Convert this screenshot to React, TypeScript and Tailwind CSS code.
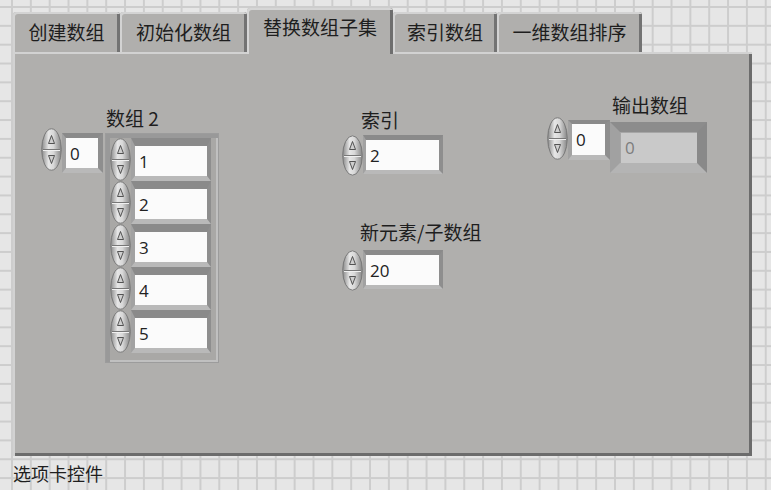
import React from 'react';

const CJK = "font-['Noto_Sans_CJK_SC','Noto_Sans',sans-serif]";
const NUM = "font-['Open_Sans','Noto_Sans',sans-serif]";

const tabs = [
  { label: '创建数组', w: 107 },
  { label: '初始化数组', w: 127 },
  { label: '替换数组子集', w: 146, active: true },
  { label: '索引数组', w: 104 },
  { label: '一维数组排序', w: 145 },
];

function Spinner({ h = 43 }: { h?: number }) {
  const mid = h / 2;
  return (
    <svg width="21" height={h} viewBox={`0 0 21 ${h}`} className="shrink-0">
      <defs>
        <linearGradient id="spg" x1="0" x2="1" y1="0" y2="0">
          <stop offset="0" stopColor="#8a8a8a" />
          <stop offset="0.35" stopColor="#e6e6e6" />
          <stop offset="0.6" stopColor="#d8d8d8" />
          <stop offset="1" stopColor="#858585" />
        </linearGradient>
      </defs>
      <ellipse cx="10.5" cy={mid} rx="9.8" ry={mid - 0.8} fill="url(#spg)" stroke="#787878" strokeWidth="1" />
      <line x1="2" y1={mid} x2="19" y2={mid} stroke="#777" strokeWidth="1" />
      <line x1="2" y1={mid + 1} x2="19" y2={mid + 1} stroke="#f0f0f0" strokeWidth="1" />
      <path d={`M10.5 ${mid - 14} L7.5 ${mid - 6} L13.5 ${mid - 6} Z`} fill="#cfcfcf" stroke="#444" strokeWidth="0.9" strokeLinejoin="round" />
      <path d={`M10.5 ${mid + 14} L7.5 ${mid + 6} L13.5 ${mid + 6} Z`} fill="#cfcfcf" stroke="#444" strokeWidth="0.9" strokeLinejoin="round" />
    </svg>
  );
}

function NumBox({ value, w, h, frame = 'border-t-[5px] border-l-[3px] border-r-[4px] border-b-[4px]' }: { value: string; w: number; h: number; frame?: string }) {
  return (
    <div
      className={`flex shrink-0 border-t-[#8a8a8a] border-l-[#a2a2a2] border-r-[#8e8e8e] border-b-[#b9b9b9] ${frame}`}
      style={{ width: w, height: h }}
    >
      <div className={`flex-1 flex items-center pl-[4px] bg-[#fbfbfb] text-[#222] text-[17px] leading-none ${NUM}`}>{value}</div>
    </div>
  );
}

function Label({ text, className = '' }: { text: string; className?: string }) {
  return <div className={`whitespace-nowrap text-[19px] leading-[19px] ${CJK} ${className}`}>{text}</div>;
}

export default function App() {
  return (
    <div className="w-[771px] h-[490px] overflow-hidden bg-[#e6e6e6] bg-[linear-gradient(to_right,#cdcdcd_2px,transparent_2px),linear-gradient(to_bottom,#cdcdcd_2px,transparent_2px)] [background-size:18.85px_18.85px] [background-position:11px_6px] pl-[13px] pt-[8px] text-[#1e1e1e]">
      {/* tab strip */}
      <div className="flex items-end h-[44px]">
        {tabs.map((t) =>
          t.active ? (
            <div
              key={t.label}
              className={`relative z-10 h-[46px] -mb-[2px] flex items-start justify-center pt-[6px] bg-[#b0afad] rounded-t-[3px] shadow-[inset_2px_2px_0_#d6d6d6,inset_-3px_0_0_#6e6e6e] text-[19px] leading-[26px] ${CJK}`}
              style={{ width: t.w }}
            >
              {t.label}
            </div>
          ) : (
            <div
              key={t.label}
              className={`h-[40px] flex items-center justify-center pb-[1px] bg-[#b0afad] rounded-t-[3px] shadow-[inset_2px_2px_0_#d3d3d3,inset_-3px_0_0_#737373] text-[19px] leading-none ${CJK}`}
              style={{ width: t.w }}
            >
              {t.label}
            </div>
          )
        )}
      </div>

      {/* tab page */}
      <div className="w-[739px] h-[404px] bg-[#b0afad] shadow-[inset_2px_2px_0_#d2d2d2,inset_-3px_-3px_0_#6c6c6c] flex items-start pl-[28px]">
        {/* 数组 2 */}
        <div className="flex flex-col mt-[56px] w-[177px]">
          <Label text="数组 2" className="ml-[65px]" />
          <div className="flex items-start mt-[1px]">
            <Spinner h={43} />
            <div className="mt-[5px]">
              <NumBox value="0" w={41} h={40} frame="border-t-[5px] border-l-[4px] border-r-[5px] border-b-[5px]" />
            </div>
            <div className="ml-[3px] mt-[6px] w-[112px] h-[228px] flex flex-col pt-[4px] pl-[4px] bg-[#a9a8a6] shadow-[inset_4px_4px_0_#999,inset_-2px_-2px_0_#c0c0c0,0_0_0_1px_#9c9c9c]">
              {['1', '2', '3', '4', '5'].map((v) => (
                <div key={v} className="flex">
                  <Spinner h={43} />
                  <NumBox value={v} w={80} h={43} frame="border-t-[8px] border-l-[4px] border-r-[4px] border-b-[5px]" />
                </div>
              ))}
            </div>
          </div>
        </div>

        {/* 索引 / 新元素 */}
        <div className="flex flex-col ml-[124px] mt-[58px] w-[101px]">
          <Label text="索引" className="ml-[19px]" />
          <div className="flex mt-[6px]">
            <Spinner h={41} />
            <NumBox value="2" w={80} h={39} />
          </div>
          <Label text="新元素/子数组" className="ml-[18px] mt-[46px]" />
          <div className="flex mt-[9px]">
            <Spinner h={41} />
            <NumBox value="20" w={80} h={39} />
          </div>
        </div>

        {/* 输出数组 */}
        <div className="flex flex-col ml-[104px] mt-[43px]">
          <Label text="输出数组" className="ml-[65px]" />
          <div className="flex items-start mt-[3px]">
            <Spinner h={43} />
            <div className="mt-[3px]">
              <NumBox value="0" w={42} h={40} frame="border-t-[4px] border-l-[4px] border-r-[5px] border-b-[5px]" />
            </div>
            <div className="mt-[5px] w-[97px] h-[51px] flex border-t-[10px] border-l-[10px] border-r-[10px] border-b-[10px] border-t-[#8c8c8c] border-l-[#a1a1a1] border-r-[#898989] border-b-[#b4b4b4]">
              <div className={`flex-1 flex items-center pl-[5px] bg-[#c9c9c9] shadow-[inset_1px_1px_0_#a6a6a6] text-[#7d7d7d] text-[17px] leading-none ${NUM}`}>0</div>
            </div>
          </div>
        </div>
      </div>

      <div className={`mt-[7px] text-[18px] leading-[20px] ${CJK}`}>选项卡控件</div>
    </div>
  );
}
